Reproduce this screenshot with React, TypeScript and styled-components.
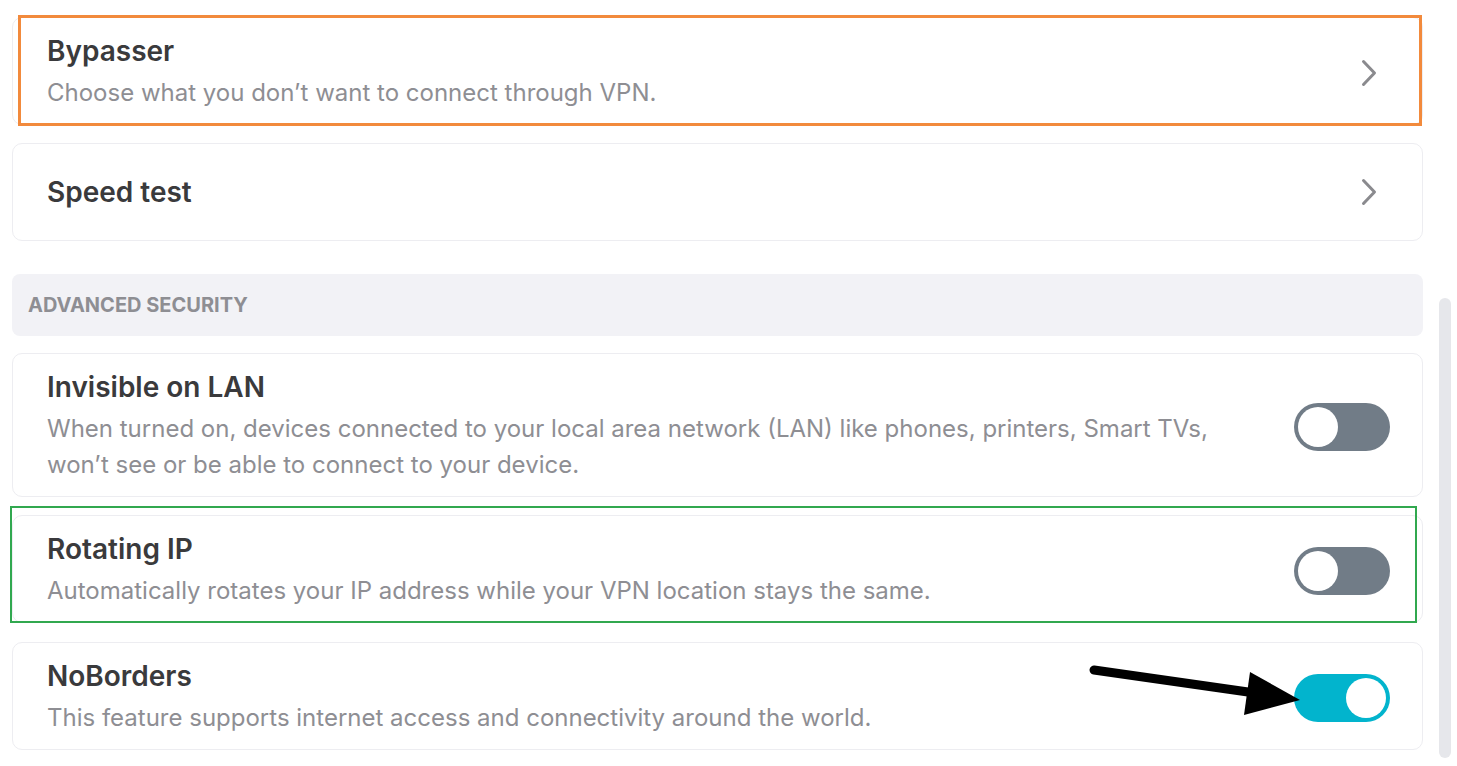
import React from "react";
import styled, { createGlobalStyle } from "styled-components";

const Global = createGlobalStyle`
  html, body { margin: 0; padding: 0; background: #ffffff; }
  body { font-family: Inter, "Noto Sans", "Liberation Sans", sans-serif; -webkit-font-smoothing: antialiased; }
`;

const Page = styled.div`
  position: relative;
  display: flex;
  align-items: flex-start;
  width: 1457px;
  height: 766px;
  overflow: hidden;
  padding: 17px 0 0 12px;
  box-sizing: border-box;
`;

const Column = styled.div`
  width: 1411px;
  display: flex;
  flex-direction: column;
`;

const Card = styled.div<{ $single?: boolean; $gapBefore?: number }>`
  display: flex;
  align-items: center;
  gap: 48px;
  box-sizing: border-box;
  min-height: ${(p) => (p.$single ? "98px" : "auto")};
  padding: ${(p) => (p.$single ? "0 32px 0 34px" : "16px 32px 13px 34px")};
  margin-top: ${(p) => p.$gapBefore ?? 18}px;
  border: 1px solid #ededf1;
  border-radius: 10px;
  background: #ffffff;
`;

const TextBlock = styled.div`
  flex: 1;
  min-width: 0;
`;

const Title = styled.div`
  font-size: 28px;
  line-height: 34px;
  font-weight: 600;
  color: #3a3a3c;
`;

const Desc = styled.div`
  margin-top: 7px;
  font-size: 24px;
  line-height: 36px;
  font-weight: 400;
  color: #8e8e93;
`;

const SectionHeader = styled.div`
  margin-top: 33px;
  height: 62px;
  display: flex;
  align-items: center;
  padding-left: 16px;
  background: #f2f2f6;
  border-radius: 8px;
  font-size: 20px;
  font-weight: 700;
  color: #8e8e93;
  text-transform: uppercase;
`;

const ChevronBox = styled.div`
  width: 16px;
  height: 28px;
  margin-right: 13px;
  display: flex;
`;

const ToggleTrack = styled.div<{ $on?: boolean }>`
  width: 96px;
  height: 48px;
  flex-shrink: 0;
  border-radius: 24px;
  box-sizing: border-box;
  padding: 4px;
  display: flex;
  justify-content: ${(p) => (p.$on ? "flex-end" : "flex-start")};
  background: ${(p) => (p.$on ? "#02b4cd" : "#717c87")};
`;

const Knob = styled.div`
  width: 40px;
  height: 40px;
  border-radius: 50%;
  background: #ffffff;
`;

const ScrollTrack = styled.div`
  width: 12px;
  margin-left: 16px;
  margin-top: 281px;
  height: 460px;
  border-radius: 6px;
  background: #e6e7eb;
`;

const Highlight = styled.div<{ $color: string; $w: number }>`
  position: absolute;
  border: ${(p) => p.$w}px solid ${(p) => p.$color};
  box-sizing: border-box;
  pointer-events: none;
`;

const ArrowSvg = styled.svg`
  position: absolute;
  left: 1080px;
  top: 655px;
  pointer-events: none;
`;

const Chevron = () => (
  <ChevronBox>
    <svg width="16" height="28" viewBox="0 0 16 28">
      <path d="M2.5 2.5 L13.5 14 L2.5 25.5" fill="none" stroke="#8a8a8e" strokeWidth="3" strokeLinecap="round" strokeLinejoin="round" />
    </svg>
  </ChevronBox>
);

const Toggle = ({ on }: { on?: boolean }) => (
  <ToggleTrack $on={on}>
    <Knob />
  </ToggleTrack>
);

export default function App() {
  return (
    <>
      <Global />
      <Page>
        <Column>
          <Card $gapBefore={0}>
            <TextBlock>
              <Title>Bypasser</Title>
              <Desc>Choose what you don’t want to connect through VPN.</Desc>
            </TextBlock>
            <Chevron />
          </Card>
          <Card $single>
            <TextBlock>
              <Title>Speed test</Title>
            </TextBlock>
            <Chevron />
          </Card>
          <SectionHeader>Advanced Security</SectionHeader>
          <Card $gapBefore={17}>
            <TextBlock>
              <Title>Invisible on LAN</Title>
              <Desc>
                When turned on, devices connected to your local area network (LAN) like phones, printers, Smart TVs,
                won’t see or be able to connect to your device.
              </Desc>
            </TextBlock>
            <Toggle />
          </Card>
          <Card>
            <TextBlock>
              <Title>Rotating IP</Title>
              <Desc>Automatically rotates your IP address while your VPN location stays the same.</Desc>
            </TextBlock>
            <Toggle />
          </Card>
          <Card $gapBefore={19}>
            <TextBlock>
              <Title>NoBorders</Title>
              <Desc>This feature supports internet access and connectivity around the world.</Desc>
            </TextBlock>
            <Toggle on />
          </Card>
        </Column>
        <ScrollTrack />
        <Highlight $color="#f28a3c" $w={3} style={{ left: 18, top: 15, width: 1404, height: 111 }} />
        <Highlight $color="#31a84f" $w={2} style={{ left: 10, top: 506, width: 1407, height: 117 }} />
        <ArrowSvg width="230" height="70" viewBox="0 0 230 70">
          <line x1="14" y1="15" x2="175" y2="38" stroke="#000" strokeWidth="9" strokeLinecap="round" />
          <polygon points="170,17 220,45 164,60" fill="#000" />
        </ArrowSvg>
      </Page>
    </>
  );
}
